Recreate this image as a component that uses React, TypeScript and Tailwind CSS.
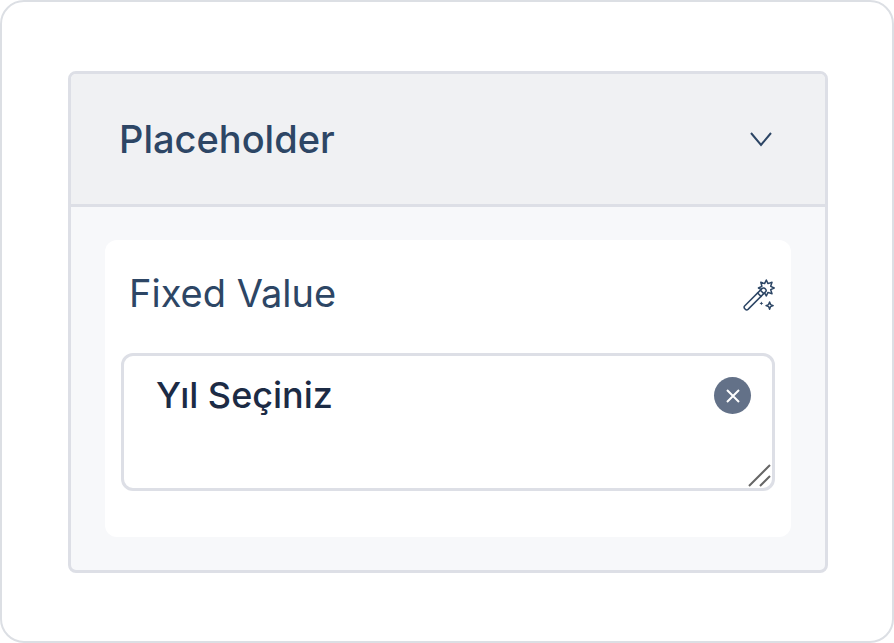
import React from "react";

const ChevronIcon = () => (
  <svg className="h-6 w-6" viewBox="0 0 24 24" fill="none" stroke="currentColor" strokeWidth="2" aria-hidden="true">
    <path d="M2 6L12 18L22 6" />
  </svg>
);

const WandIcon = () => (
  <svg
    className="h-8 w-8"
    viewBox="0 0 32 32"
    fill="none"
    stroke="currentColor"
    strokeWidth="1.5"
    strokeLinejoin="round"
    strokeLinecap="round"
    aria-hidden="true"
  >
    <path d="M23.3 1L25 4.6L29 3.3L27.7 7.3L31.2 9L27.7 10.7L29 14.7L25 13.4L23.3 17L21.4 13.4L17.8 14.7L18.9 10.7L15.4 9L18.9 7.3L17.8 3.3L21.6 4.6Z" />
    <path d="M1.6 27L19.2 9.4C21 7.6 24.4 11 22.6 12.8L5 30.4C3.2 32 0 28.8 1.6 27Z" fill="white" />
    <path d="M14.6 14L18 17.4M17.4 11.2L20.8 14.6" />
    <path d="M26.6 23L27.6 25.6L30.2 26.6L27.6 27.6L26.6 30.2L25.6 27.6L23 26.6L25.6 25.6Z" />
    <path d="M18.4 22.5L19 23.8L20.3 24.4L19 25L18.4 26.3L17.8 25L16.5 24.4L17.8 23.8Z" fill="currentColor" stroke="none" />
  </svg>
);

const ClearIcon = () => (
  <svg className="h-4 w-4" viewBox="0 0 16 16" fill="none" stroke="currentColor" strokeWidth="2" aria-hidden="true">
    <path d="M2 2L14 14M14 2L2 14" />
  </svg>
);

const ResizeGrip = () => (
  <svg
    className="pointer-events-none absolute right-0 bottom-0 h-6 w-6 text-[#666666]"
    viewBox="0 0 24 24"
    fill="none"
    stroke="currentColor"
    strokeWidth="2"
    aria-hidden="true"
  >
    <path d="M1 22L22 1M12 22L22 12" />
  </svg>
);

const App = () => {
  const [open, setOpen] = React.useState(true);
  const [value, setValue] = React.useState("Yıl Seçiniz");

  return (
    <main className="rounded-3xl border-2 border-[#dcdfe4] bg-white pt-[69px] pr-16 pb-[68px] pl-[66px] font-['Inter',sans-serif] text-[#2d4665]">
      <section className="overflow-hidden rounded-lg border-3 border-[#dddfe6] bg-[#f7f8fa]">
        <h2>
          <button
            type="button"
            aria-expanded={open}
            onClick={() => setOpen(!open)}
            className="flex w-full items-center justify-between bg-[#f0f1f3] py-10 pr-[52px] pl-12 text-left text-[38px] leading-[50px] font-medium"
          >
            Placeholder
            <ChevronIcon />
          </button>
        </h2>
        {open && (
          <div className="border-t-3 border-[#dddfe6] px-[34px] py-[33px]">
            <div className="rounded-xl bg-white px-4 pt-7 pb-[46px]">
              <div className="flex items-center justify-between pl-2">
                <label htmlFor="fixed-value" className="text-[38px] leading-[50px]">
                  Fixed Value
                </label>
                <button type="button" aria-label="Suggest a value" className="pt-1">
                  <WandIcon />
                </button>
              </div>
              <div className="relative mt-[35px] flex items-start rounded-xl border-3 border-[#dddfe6] pr-[21px]">
                <textarea
                  id="fixed-value"
                  value={value}
                  onChange={(e) => setValue(e.target.value)}
                  className="h-[132px] min-w-0 flex-1 resize-none py-4 pl-8 text-[36px] leading-[46px] font-medium text-[#1c2b45] outline-none"
                />
                <button
                  type="button"
                  aria-label="Clear"
                  onClick={() => setValue("")}
                  className="mt-[21px] flex h-[37px] w-[37px] items-center justify-center rounded-full bg-[#637188] text-white"
                >
                  <ClearIcon />
                </button>
                <ResizeGrip />
              </div>
            </div>
          </div>
        )}
      </section>
    </main>
  );
};

export default App;
